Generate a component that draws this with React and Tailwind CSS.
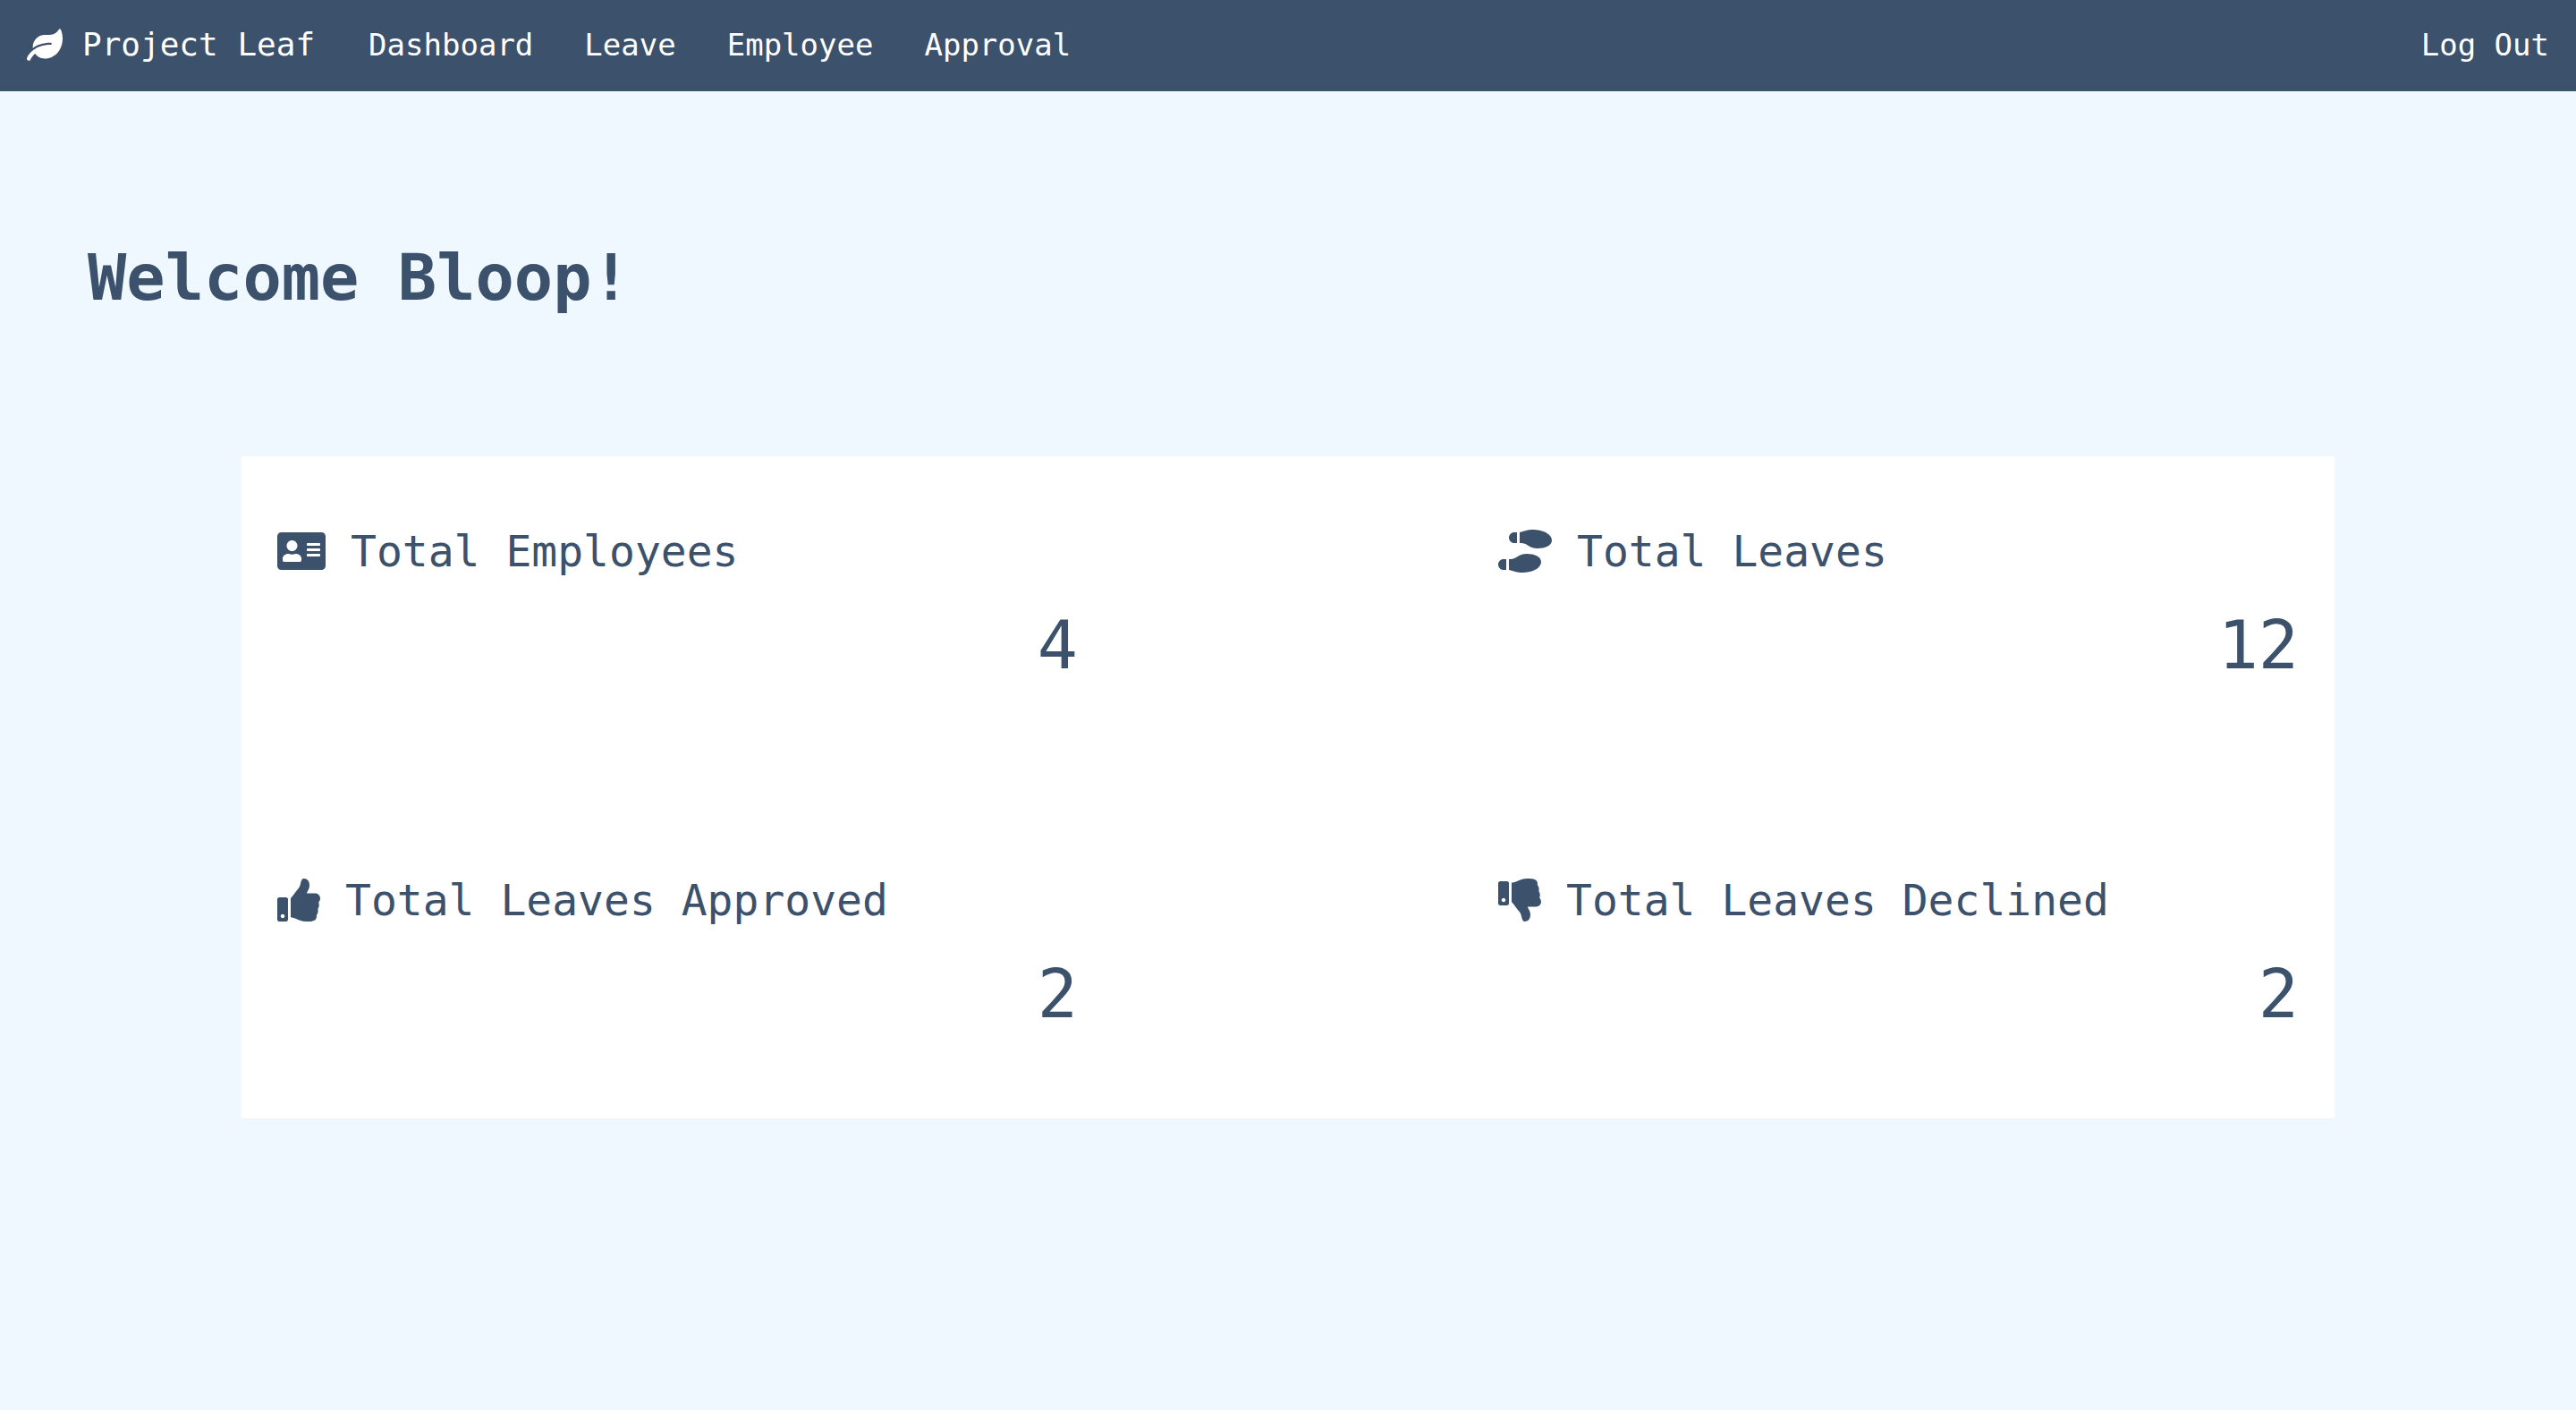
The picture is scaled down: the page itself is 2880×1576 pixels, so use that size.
import { FaLeaf, FaAddressCard, FaShoePrints, FaThumbsUp, FaThumbsDown } from "react-icons/fa";

const links = ["Dashboard", "Leave", "Employee", "Approval"];

const stats = [
  { label: "Total Employees", value: 4, Icon: FaAddressCard, size: "h-12 w-[54px]" },
  { label: "Total Leaves", value: 12, Icon: FaShoePrints, size: "h-12 w-[60px]" },
  { label: "Total Leaves Approved", value: 2, Icon: FaThumbsUp, size: "h-12 w-12" },
  { label: "Total Leaves Declined", value: 2, Icon: FaThumbsDown, size: "h-12 w-12" },
];

export default function App() {
  return (
    <div className="min-h-screen bg-[#f0f8ff] font-['DejaVu_Sans_Mono','Liberation_Mono',monospace] text-[#3c516b]">
      <nav className="flex items-center bg-[#3c516b] px-[30px] pt-[22px] pb-6 text-[34px] leading-[56px] text-white">
        <a href="#" className="mr-[60px] flex items-center gap-[22px] text-[36px]">
          <FaLeaf className="h-10 w-10" />
          Project Leaf
        </a>
        <div className="flex gap-[57px]">
          {links.map((l) => (
            <a key={l} href="#">{l}</a>
          ))}
        </div>
        <button className="ml-auto">Log Out</button>
      </nav>
      <h1 className="px-[98px] pt-[160px] text-[72px] font-bold leading-[96px]">Welcome Bloop!</h1>
      <main className="mx-[270px] mt-[152px] grid grid-cols-2 gap-x-[calc(100%/6)] gap-y-28 bg-white pt-[30px] pb-[42px]">
        {stats.map(({ label, value, Icon, size }) => (
          <section key={label} className="p-10">
            <h2 className="flex items-center gap-7 text-[48px] leading-[72px]"><Icon className={size} />{label}</h2>
            <p className="mt-3 text-right text-[75px] leading-[114px]">{value}</p>
          </section>
        ))}
      </main>
    </div>
  );
}
